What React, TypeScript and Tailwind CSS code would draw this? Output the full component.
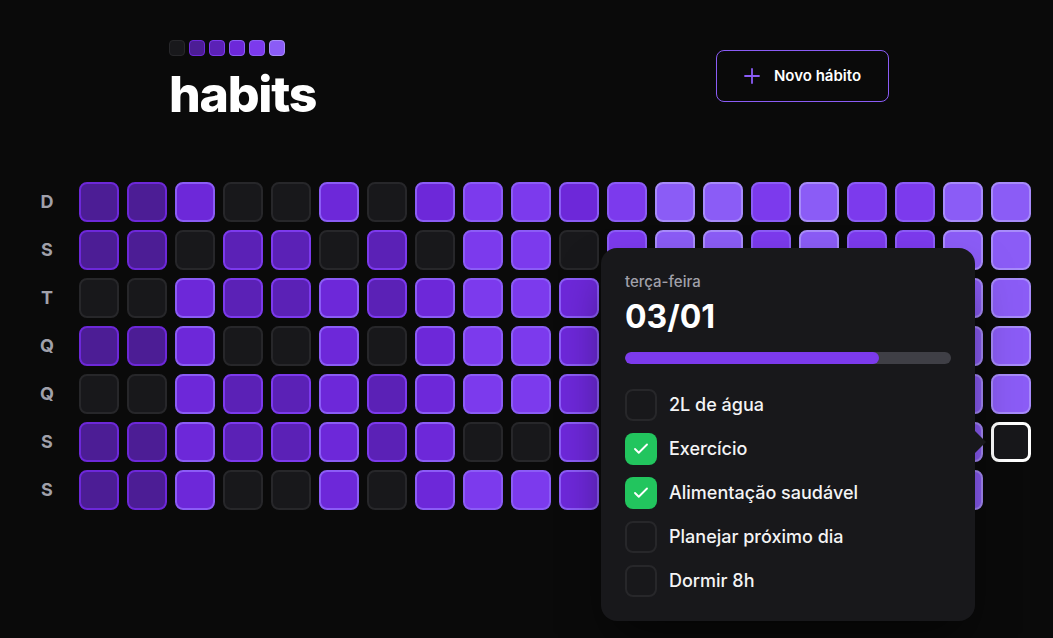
import { Check } from 'lucide-react';

const days = ['D', 'S', 'T', 'Q', 'Q', 'S', 'S'];

// 0 = vazio, 1..5 = intensidade, -1 = selecionado, 9 = sem dia
const grid: number[][] = [
  [1, 1, 3, 0, 0, 3, 0, 3, 4, 4, 3, 4, 5, 5, 4, 5, 4, 4, 5, 5],
  [1, 1, 0, 2, 2, 0, 2, 0, 4, 4, 0, 4, 5, 5, 4, 5, 4, 4, 5, 5],
  [0, 0, 3, 2, 2, 3, 2, 3, 4, 4, 3, 4, 5, 5, 4, 5, 4, 4, 5, 5],
  [1, 1, 3, 0, 0, 3, 0, 3, 4, 4, 3, 4, 5, 5, 4, 5, 4, 4, 5, 5],
  [0, 0, 3, 2, 2, 3, 2, 3, 4, 4, 3, 4, 5, 5, 4, 5, 4, 4, 5, 5],
  [1, 1, 3, 2, 2, 3, 2, 3, 0, 0, 3, 4, 5, 5, 4, 5, 4, 4, 5, -1],
  [1, 1, 3, 0, 0, 3, 0, 3, 4, 4, 3, 4, 5, 5, 4, 5, 4, 5, 5, 9],
];

const levels: Record<number, string> = {
  0: 'bg-[#18181b] border-[#27272a]',
  1: 'bg-[#4c1d95] border-[#6d28d9]',
  2: 'bg-[#5b21b6] border-[#7c3aed]',
  3: 'bg-[#6d28d9] border-[#8b5cf6]',
  4: 'bg-[#7c3aed] border-[#8b5cf6]',
  5: 'bg-[#8b5cf6] border-[#a78bfa]',
};

const habits = [
  { name: '2L de água', done: false },
  { name: 'Exercício', done: true },
  { name: 'Alimentação saudável', done: true },
  { name: 'Planejar próximo dia', done: false },
  { name: 'Dormir 8h', done: false },
];

function Cell({ level }: { level: number }) {
  if (level === 9) return <div className="w-10 h-10 shrink-0" />;
  if (level === -1)
    return <div className="w-10 h-10 shrink-0 rounded-lg border-[3px] border-white bg-[#18181b]" />;
  return <div className={`w-10 h-10 shrink-0 rounded-lg border-2 ${levels[level]}`} />;
}

export default function App() {
  return (
    <div className="h-[638px] w-full overflow-hidden bg-[#0a0a0a] text-white font-['Inter',sans-serif]">
      {/* Header */}
      <header className="ml-[169px] w-[720px] pt-10 flex justify-between">
        <div>
          <div className="flex gap-1">
            {[0, 1, 2, 3, 4, 5].map((l) => (
              <div key={l} className={`w-4 h-4 rounded border ${levels[l]}`} />
            ))}
          </div>
          <h1 className="mt-[13px] text-[50px] leading-none font-extrabold tracking-tight">habits</h1>
        </div>
        <button className="mt-[10px] w-[173px] h-[52px] flex items-center justify-center gap-[14px] rounded-lg border border-[#8b5cf6] text-[15px] font-semibold text-white">
          <svg width="16" height="16" viewBox="0 0 16 16" fill="none" stroke="#8b5cf6" strokeWidth="1.8" strokeLinecap="round">
            <path d="M8 1v14 M1 8h14" />
          </svg>
          Novo hábito
        </button>
      </header>

      {/* Grid */}
      <section className="relative mt-[63px] ml-8 flex flex-col gap-2">
        {grid.map((row, r) => (
          <div key={r} className="flex items-center">
            <span className="w-[30px] text-center text-lg font-bold text-[#a1a1aa]">{days[r]}</span>
            <div className="ml-[17px] flex gap-2">
              {row.map((l, c) => (
                <Cell key={c} level={l} />
              ))}
            </div>
          </div>
        ))}

        {/* Popover */}
        <div className="absolute left-[569px] top-[66px] w-[374px] rounded-2xl bg-[#18181b] p-6 shadow-2xl shadow-black/60">
          <div className="absolute -right-[11px] top-[183px] w-0 h-0 border-y-[11px] border-y-transparent border-l-[11px] border-l-[#18181b]" />
          <p className="text-[15px] leading-5 font-medium text-[#a1a1aa]">terça-feira</p>
          <p className="mt-[5px] text-[32px] leading-10 font-bold">03/01</p>
          <div className="mt-[15px] h-3 rounded-full bg-[#3f3f46] overflow-hidden">
            <div className="h-full w-[78%] rounded-full bg-[#7c3aed]" />
          </div>
          <ul className="mt-[25px] flex flex-col gap-3">
            {habits.map((h) => (
              <li key={h.name} className="flex items-center gap-3">
                {h.done ? (
                  <span className="w-8 h-8 rounded-lg bg-[#22c55e] grid place-items-center">
                    <Check size={18} strokeWidth={2.5} color="white" />
                  </span>
                ) : (
                  <span className="w-8 h-8 rounded-lg border-2 border-[#27272a] bg-[#18181b]" />
                )}
                <span className="text-lg font-medium text-[#f4f4f5]">{h.name}</span>
              </li>
            ))}
          </ul>
        </div>
      </section>
    </div>
  );
}
